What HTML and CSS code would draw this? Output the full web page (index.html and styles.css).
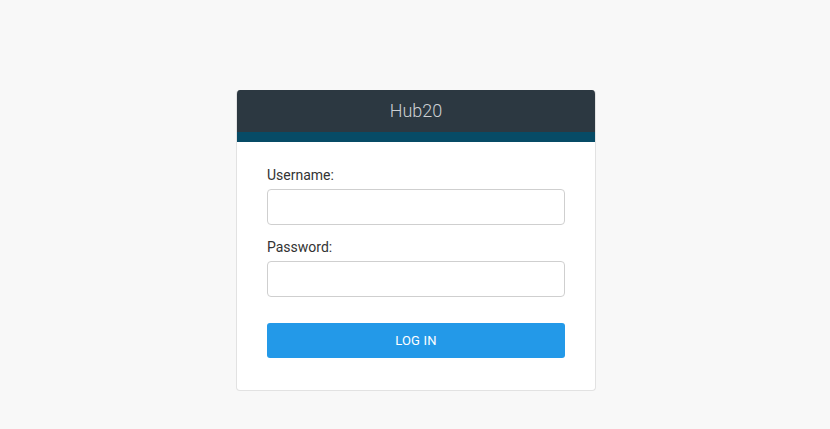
FILE: index.html
```html
<!DOCTYPE html>
<html>
<head>
<meta charset="utf-8">
<link rel="stylesheet" href="styles.css">
</head>
<body>
<div class="page">
  <div class="card">
    <div class="card-header">Hub20</div>
    <div class="card-stripe"></div>
    <form class="card-body">
      <label class="field-label">Username:</label>
      <input class="field-input" type="text">
      <label class="field-label second">Password:</label>
      <input class="field-input" type="password">
      <button class="login-btn" type="button">LOG IN</button>
    </form>
  </div>
</div>
</body>
</html>
```
FILE: styles.css
```css
html, body {
  margin: 0;
  padding: 0;
  background: #f8f8f8;
  font-family: Roboto, "Liberation Sans", sans-serif;
}
.page {
  display: flex;
  justify-content: center;
  padding-top: 90px;
  padding-left: 2px;
}
.card {
  width: 360px;
  box-sizing: border-box;
  background: #fff;
  border: 1px solid #e2e2e2;
  border-top: none;
  border-radius: 4px;
  overflow: hidden;
}
.card-header {
  background: #2c3841;
  color: #ccd0d3;
  font-weight: 300;
  font-size: 18px;
  height: 42px;
  line-height: 42px;
  text-align: center;
}
.card-stripe {
  height: 10px;
  background: #074b66;
}
.card-body {
  display: flex;
  flex-direction: column;
  padding: 23px 30px 32px 30px;
  margin: 0;
}
.field-label {
  font-size: 14px;
  line-height: 20px;
  color: #333;
  margin-bottom: 4px;
}
.field-label.second {
  margin-top: 12px;
}
.field-input {
  height: 36px;
  box-sizing: border-box;
  border: 1px solid #cfcfcf;
  border-radius: 4px;
  background: #fff;
  padding: 0 10px;
  font-size: 14px;
  margin: 0;
}
.login-btn {
  margin-top: 26px;
  height: 35px;
  border: none;
  border-radius: 3px;
  background: #2399e8;
  color: #fff;
  font-family: Roboto, "Liberation Sans", sans-serif;
  font-size: 13px;
  letter-spacing: 0.2px;
}
```
